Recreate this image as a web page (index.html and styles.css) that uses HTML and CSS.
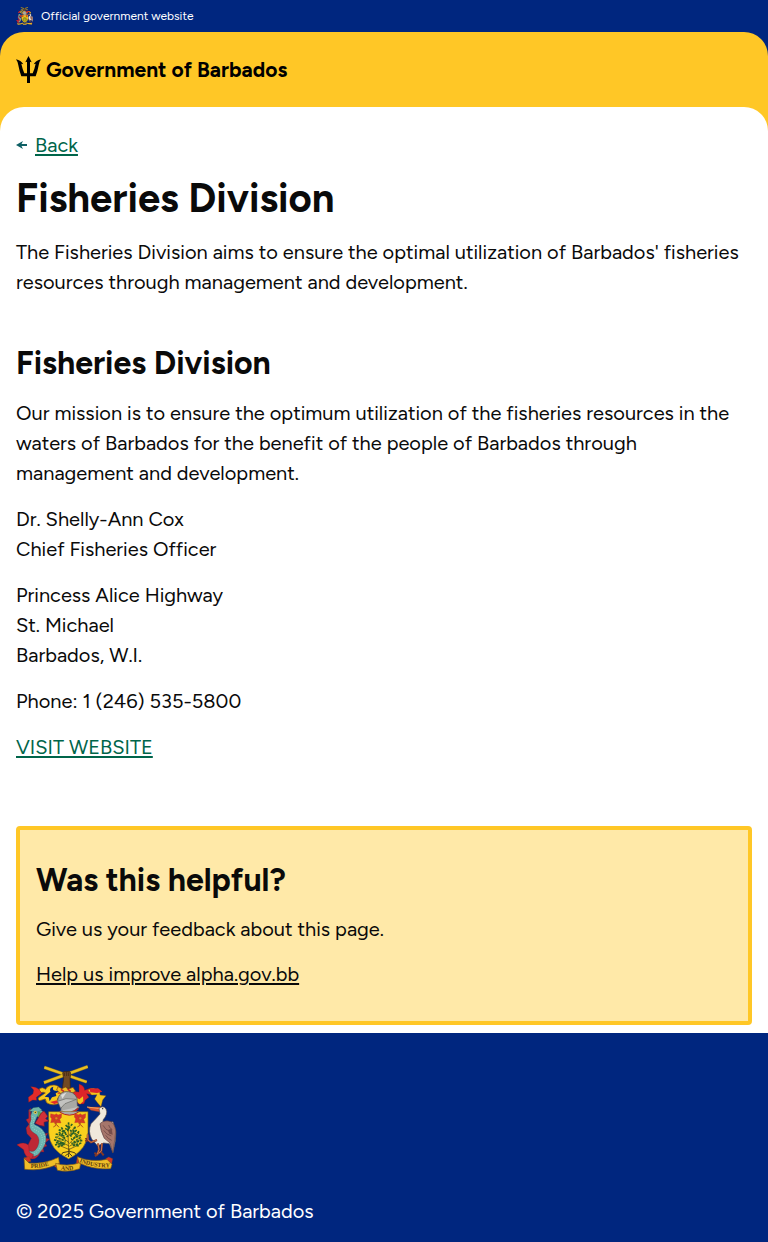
FILE: index.html
```html
<!DOCTYPE html>
<html lang="en">
<head>
<meta charset="utf-8">
<meta name="viewport" content="width=device-width, initial-scale=1">
<title>Fisheries Division</title>
<link rel="stylesheet" href="styles.css">
</head>
<body>
<svg class="defs" aria-hidden="true">
  <symbol id="arms" viewBox="24 27 303 321">
    <!-- crossed sugar cane and fist -->
    <g fill="none">
      <path d="M109 34 L236 78 M239 32 L108 80" stroke="#8a7020" stroke-width="10"/>
      <path d="M109 34 L236 78 M239 32 L108 80" stroke="#e8bf22" stroke-width="7"/>
    </g>
    <path d="M164 51q3-7 9-4l10-1q6 2 5 9l-2 13 1 29h-24l4-28z" fill="#714923" stroke="#38210f" stroke-width="2"/>
    <path d="M169 50v10M176 48v12M182 49v11" stroke="#38210f" stroke-width="2"/>
    <!-- mantling -->
    <path d="M160 103Q150 82 128 88Q115 92 113 100Q104 92 96 97Q90 103 99 110Q106 107 112 111L93 124Q86 130 95 134L112 129Q113 143 126 145Q145 150 157 138L148 130L153 122L172 108Z" fill="#f6c81c" stroke="#7d4b14" stroke-width="2"/>
    <path d="M68 92Q84 91 94 101L101 112L85 124L86 133L74 132L62 139L61 124L75 113L77 102Z" fill="#e32b28" stroke="#7c1d1c" stroke-width="1"/>
    <path d="M127 107q-4-12 9-15-4 10 5 12l16 1-14 7 2 8-13 4-7 12-3-12-12-2z" fill="#00267f"/>
    <path d="M157 103l14 2-6 6-17 3zM126 138l21-5 5 7-13 4z" fill="#e32b28"/>
    <path d="M192 106L213 108L213 84Q229 88 230 103L246 97Q266 96 269 110L250 116L236 113L243 124L232 132L228 143L212 145L201 127Z" fill="#dd2429" stroke="#6e1a18"/>
    <path d="M240 102Q262 91 275 107L276 117L294 119L284 132L279 152L269 141L260 129L267 116L251 117Z" fill="#f4c51c" stroke="#7d4b14"/>
    <path d="M245 98l25-1 13 10-16 4-20-2z" fill="#dd2429"/>
    <path d="M203 123l11 7 11-9 1 15-10 9-9-8z" fill="#f4c51c"/>
    <path d="M146 102l4-10 12 6 10-5 9 6 14-5 8 12-15 7-32-1z" fill="#f0bd22" stroke="#7a4013" stroke-width="2"/>
    <path d="M159 100l9 7M179 99l9 8" stroke="#c6282a" stroke-width="5"/>
    <!-- helmet -->
    <path d="M149 136Q150 112 170 107Q197 104 207 126L208 149L214 153L202 166Q186 180 158 167L160 146Z" fill="#a9a9a5" stroke="#4d4c49" stroke-width="2"/>
    <path d="M149 136l25-8 31 2-34 13-13 14zM158 164q31 14 55-12" fill="#c3c3c0" stroke="#676662" stroke-width="2"/>
    <path d="M159 117l17-8-13 19z" fill="#deddda"/>
    <path d="M157 167Q184 181 211 157" fill="none" stroke="#b72627" stroke-width="5"/>
    <!-- shield -->
    <path d="M122 167H240V229Q239 280 182 309Q123 281 122 229Z" fill="#f9d01e" stroke="#735e22" stroke-width="2"/>
    <path d="M154 167Q184 188 213 167Z" fill="#a9a9a5"/>
    <path d="M155 168Q185 187 212 168" fill="none" stroke="#b72627" stroke-width="3"/>
    <g id="flower" fill="#dc3427" stroke="#a6491d" stroke-width="1">
      <path d="M128 173l12 3 5-3 5 4 11-4-1 12-5 5 4 11-12-1-5 5-4-6-10 1 3-12-4-5z"/>
      <path d="M136 181l18 14M154 181l-18 14M144 195v13l-8 5M145 205l8 9" fill="none" stroke="#b2531b" stroke-width="3"/>
      <circle cx="145" cy="187" r="4" fill="#e98424"/>
    </g>
    <use href="#flower" x="72"/>
    <!-- bearded fig tree -->
    <g fill="none" stroke="#493d18" stroke-width="2">
      <path d="M183 205Q178 238 183 292M183 260L151 234M182 269L143 251M184 263L213 231M184 271L220 249M182 280L149 266M184 280L215 265M181 242L161 219M183 239L199 213"/>
      <path d="M183 277v15l-11 7M184 286l-20 4-3 6M184 286l16 4 4 6M183 290l-2 13M184 292l8 8" stroke-width="3"/>
    </g>
    <g fill="none" stroke="#286027" stroke-width="5" stroke-dasharray="7 3">
      <path d="M182 199l-3 28M173 207l17 19M193 204l-16 18M160 214l19 29M152 221l22 10M153 228l20 22M143 234l29 7M142 243l31 12M138 251l32 12M144 259l29 8M141 267l31-8M149 273l20-8M202 212l-14 30M206 222l-21 19M213 226l-19 26M220 237l-31 13M218 244l-25 18M223 253l-33 9M220 261l-26 8M212 270l-20-5M161 237l14-20M195 223l12 20"/>
    </g>
    <path d="M144 245l16-9M151 258l12-11M199 235l16 5M202 259l10-12" stroke="#73842b" stroke-width="3"/>
    <!-- dolphin supporter -->
    <path d="M62 162L69 157Q64 177 77 190L72 205Q93 216 107 233L120 232L111 245L125 250L111 261L117 270L105 275L108 288L98 287Q87 314 65 308Q49 298 47 280L27 266L39 263L60 267L70 247L57 233L54 216L63 205L54 191L62 187Z" fill="#bd2835" stroke="#701c2b"/>
    <path d="M72 166Q78 154 96 160L114 173L102 184L88 180L78 205Q109 216 114 242Q116 267 95 290Q82 309 66 294L62 283Q77 294 89 272Q99 251 86 236Q61 225 65 202Q72 192 68 180Z" fill="#6bb5b0" stroke="#334c58"/>
    <path d="M75 180Q63 205 79 220Q108 232 102 260Q95 284 78 294M80 184Q72 205 84 212Q118 228 108 266" fill="none" stroke="#b1ded1" stroke-width="2" stroke-dasharray="3 4"/>
    <path d="M27 266Q48 255 62 268L64 288L77 296L70 309Q50 304 47 281Z" fill="#cf2b37" stroke="#701c2b"/>
    <path d="M63 166L76 155L92 153L102 162L90 168L74 166Z" fill="#6fb5a6" stroke="#285b58"/>
    <path d="M91 166L111 177L105 188L88 183Z" fill="#55a754"/>
    <path d="M92 184Q99 168 108 165L119 181L113 188L123 195L108 199L109 211L94 208L81 202Z" fill="#d23039" stroke="#6d1d2b" stroke-width="2"/>
    <circle cx="82" cy="169" r="5" fill="#dfc74a"/><circle cx="82" cy="169" r="2" fill="#232323"/>
    <!-- pelican supporter -->
    <path d="M237 153L280 153L289 164L277 168L249 163Z" fill="#d85431" stroke="#833b20"/>
    <path d="M237 153L277 158" stroke="#f2a65d" stroke-width="3"/>
    <path d="M273 157Q286 147 294 159Q301 174 285 192L287 203L315 197L324 228L322 255L315 290L304 263L287 261L269 270L251 249Q239 226 249 203Q265 187 276 174Z" fill="#f0e9dc" stroke="#584c48" stroke-width="2"/>
    <path d="M276 203Q289 190 309 197Q320 203 323 224L321 248L314 291L306 261L289 247Q277 223 276 203Z" fill="#a6766b" stroke="#5c3e40" stroke-width="2"/>
    <path d="M285 208q7 15 22 18M287 223q8 13 23 17M293 238q7 11 18 15M302 207q2 10 11 14" fill="none" stroke="#643f40" stroke-width="2"/>
    <path d="M299 222l12-4 3 18-10-3z" fill="#764d4a"/>
    <circle cx="284" cy="158" r="2" fill="#211f27"/>
    <path d="M267 252l-18 7-9-7-1-17M240 245l-8 4M241 250l-9 6M270 262l3 19-5 14-9-4M282 262l-2 23-8 7-11 9M279 288l8 10" fill="none" stroke="#833925" stroke-width="6"/>
    <path d="M267 252l-18 7-9-7-1-17M270 262l3 19-5 14M282 262l-2 23-8 7" fill="none" stroke="#cd764b" stroke-width="3"/>
    <!-- motto ribbon -->
    <path d="M48 305l16-3 5 14-16 4zM142 306l13 14-5 16-10-4zM208 302l14 16-9 18-8-15zM293 308l9-5 12 5-5 25-14-5z" fill="#d33325" stroke="#795414" stroke-width="1"/>
    <g fill="#efbd28" stroke="#795414" stroke-width="2">
      <path d="M48 306L63 321Q105 326 152 304L154 322Q106 347 50 340Z"/>
      <path d="M143 322Q180 334 218 319L215 338Q181 350 148 343Z"/>
      <path d="M208 302Q250 320 297 310L312 325L308 338Q258 342 213 321Z"/>
    </g>
  </symbol>
</svg>
<div class="official">
  <svg class="official-arms" aria-hidden="true"><use href="#arms"/></svg>
  <span>Official government website</span>
</div>
<div class="brand-backdrop">
  <header class="brand">
    <svg class="trident" viewBox="0 0 75 81" aria-hidden="true">
      <path d="M37.500 0L47 19L42 17V52H50Q56 38 59 23L53 25Q60 13 75 10Q69 18 68 28Q65 45 59 61H42V81H33V61H16Q10 45 7 28Q6 18 0 10Q15 13 22 25L16 23Q19 38 25 52H33V17L28 19Z"/>
    </svg>
    <span class="brand-name">Government of Barbados</span>
  </header>
</div>
<div class="sheet-backdrop">
  <main class="sheet">
    <nav class="back">
      <svg class="arrow" viewBox="0 0 12 10" aria-hidden="true"><path d="M0 5L7 1L5.500 4H11V6H5.500L7 9Z"/></svg>
      <a class="link" href="#">Back</a>
    </nav>
    <h1 class="title">Fisheries Division</h1>
    <p class="text">The Fisheries Division aims to ensure the optimal utilization of Barbados' fisheries resources through management and development.</p>
    <section class="division">
      <h2 class="subtitle">Fisheries Division</h2>
      <p class="text">Our mission is to ensure the optimum utilization of the fisheries resources in the waters of Barbados for the benefit of the people of Barbados through management and development.</p>
      <p class="text">Dr. Shelly-Ann Cox<br>Chief Fisheries Officer</p>
      <p class="text">Princess Alice Highway<br>St. Michael<br>Barbados, W.I.</p>
      <p class="text">Phone: 1 (246) 535-5800</p>
      <p class="text"><a class="link" href="#">VISIT WEBSITE</a></p>
    </section>
    <aside class="feedback">
      <h2 class="subtitle">Was this helpful?</h2>
      <p class="text">Give us your feedback about this page.</p>
      <p class="text"><a class="link link-dark" href="#">Help us improve alpha.gov.bb</a></p>
    </aside>
  </main>
</div>
<footer class="footer">
  <svg class="footer-arms" viewBox="24 27 303 321" role="img" aria-label="Coat of arms of Barbados">
    <use href="#arms" x="24" y="27" width="303" height="321"/>
    <path id="motto-left" d="M68 336Q108 338 150 318" fill="none"/>
    <path id="motto-mid" d="M158 342Q183 346 212 337" fill="none"/>
    <path id="motto-right" d="M214 318Q255 336 314 334" fill="none"/>
    <g class="motto">
      <text><textPath href="#motto-left">PRIDE</textPath></text>
      <text><textPath href="#motto-mid">AND</textPath></text>
      <text><textPath href="#motto-right">INDUSTRY</textPath></text>
    </g>
  </svg>
  <p class="text">© 2025 Government of Barbados</p>
</footer>
</body>
</html>
```
FILE: styles.css
```css
* { box-sizing: border-box; }

body {
  margin: 0;
  background: #00267f;
  color: #0a0a0a;
  font-family: Figtree, Lato, "Noto Sans", sans-serif;
  font-size: 20px;
  line-height: 30px;
}

.defs { display: none; }

.official {
  display: flex;
  align-items: center;
  gap: 8px;
  height: 32px;
  padding: 0 16px;
  color: #fff;
  font-size: 12px;
  line-height: 16px;
}

.official-arms { width: 17px; height: 18px; }

.brand {
  display: flex;
  align-items: center;
  gap: 5px;
  padding: 24px 16px;
  border-radius: 24px 24px 0 0;
  background: #ffc726;
  color: #000;
}

.trident { width: 25px; height: 27px; }

.brand-name {
  font-size: 21px;
  font-weight: 700;
  line-height: 27px;
}

.sheet-backdrop { background: #ffc726; }

.sheet {
  padding: 24px 16px 8px;
  border-radius: 24px 24px 0 0;
  background: #fff;
}

.back {
  display: flex;
  align-items: center;
  gap: 7px;
  margin-bottom: 16px;
  line-height: 28px;
}

.arrow { width: 12px; height: 10px; fill: #0e5f64; }

.link {
  color: #00654a;
  text-decoration-thickness: 2px;
  text-underline-offset: 2px;
}

.link-dark { color: #0a0a0a; }

.title {
  margin: 0 0 16px;
  font-size: 40px;
  font-weight: 700;
  line-height: 46px;
}

.subtitle {
  margin: 0 0 16px;
  font-size: 32px;
  font-weight: 700;
  line-height: 37px;
}

.text { margin: 0; }

.text + .text { margin-top: 16px; }

.division { margin-top: 48px; }

.feedback {
  margin-top: 64px;
  padding: 32px 16px;
  border: 4px solid #ffc726;
  border-radius: 4px;
  background: #ffe9a8;
  line-height: 29px;
}

.footer {
  display: flex;
  flex-direction: column;
  gap: 24px;
  padding: 32px 16px 16px;
  color: #fff;
}

.footer-arms { width: 101px; height: 107px; }

.motto {
  fill: #5b3b0d;
  font-family: "Liberation Serif", serif;
  font-size: 18px;
  font-weight: 700;
}
```
